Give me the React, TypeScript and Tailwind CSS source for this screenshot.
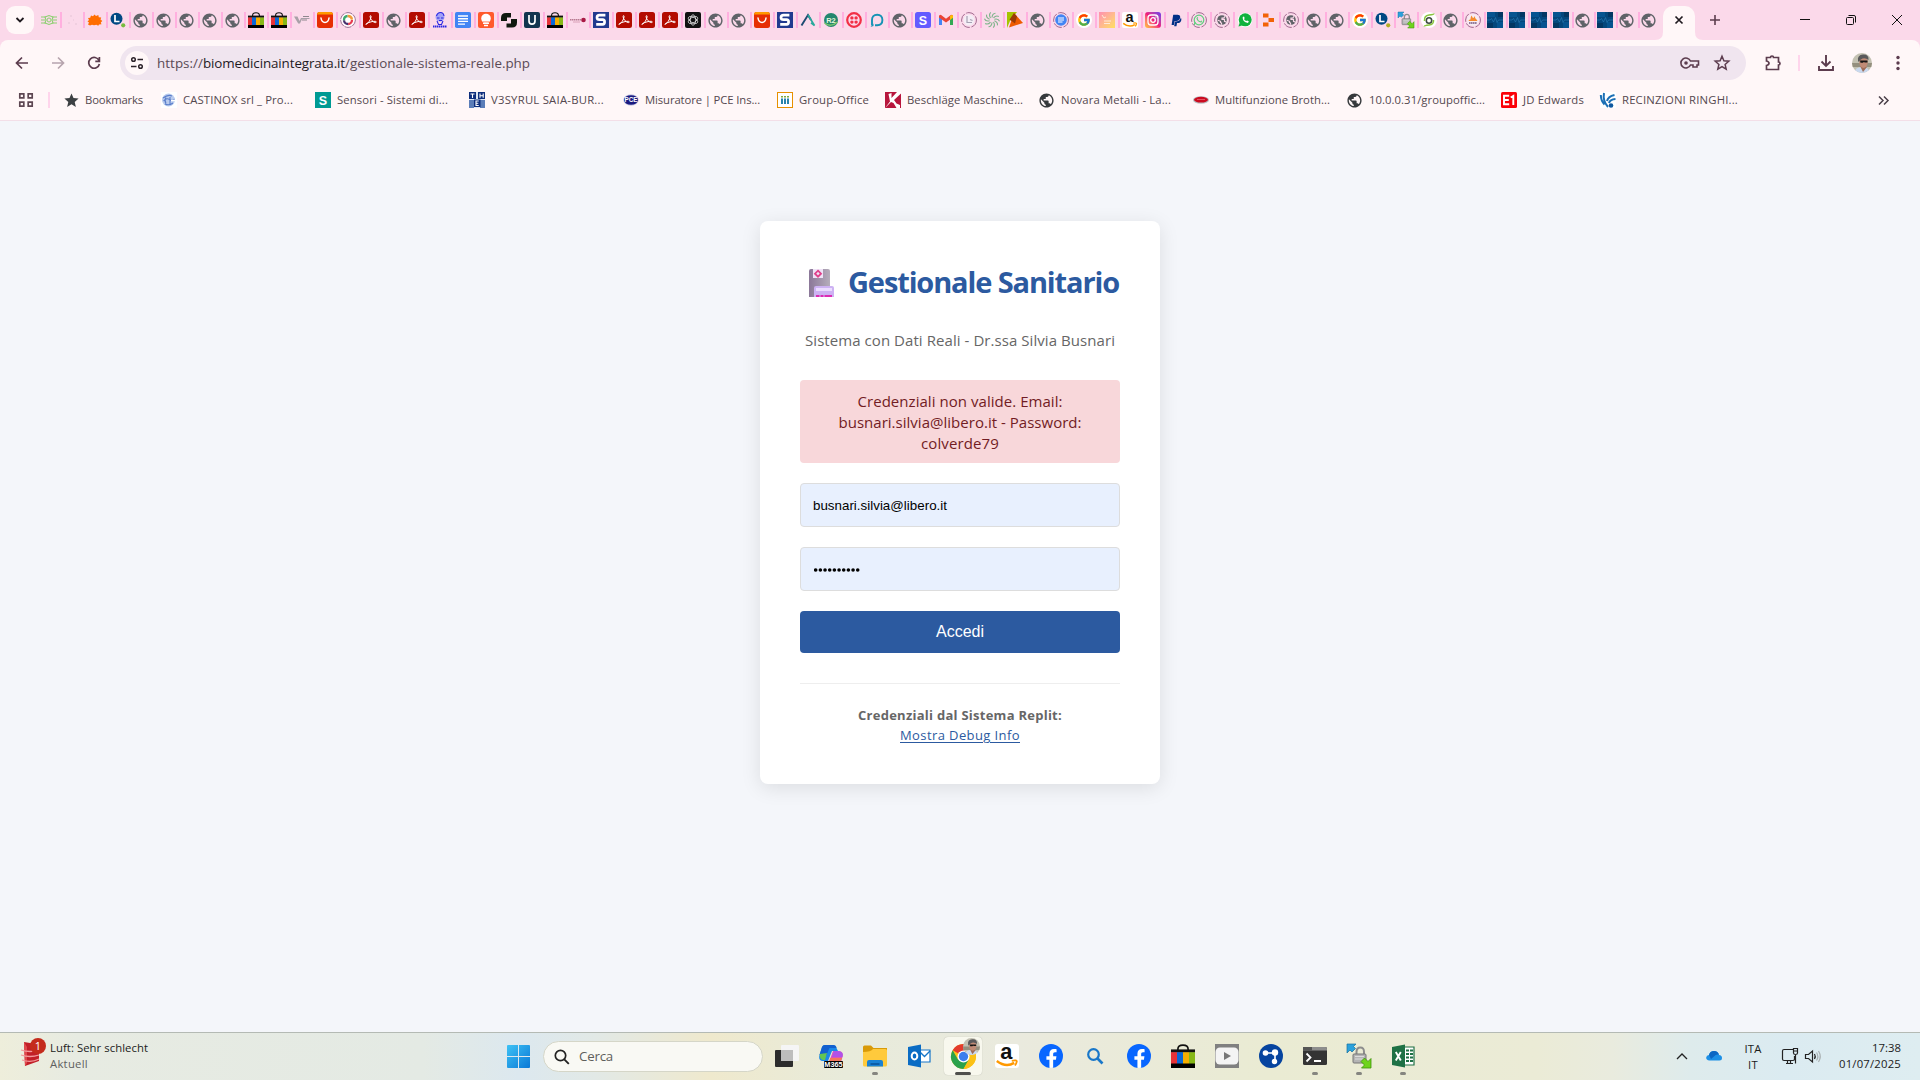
import { useLayoutEffect, useRef, useState } from 'react';
import type { ReactNode } from 'react';
import { MdPublic, MdStar } from 'react-icons/md';
import { FcGoogle } from 'react-icons/fc';
import { FaFacebookF, FaPaypal } from 'react-icons/fa';

const SANS = "font-['Open_Sans','Noto_Sans',sans-serif]";
const ARIAL = "font-['Liberation_Sans',Arial,sans-serif]";

/** One line of text whose letter spacing is adjusted so the line is `w` pixels wide. */
function Fit({ w, children, className = '' }: { w: number; children: string; className?: string }) {
  const ref = useRef<HTMLSpanElement>(null);
  const [ls, setLs] = useState(0);
  useLayoutEffect(() => {
    if (ref.current) setLs((w - ref.current.getBoundingClientRect().width) / children.length);
  }, [w, children]);
  return (
    <span ref={ref} className={`inline-block whitespace-pre ${className}`} style={{ letterSpacing: ls }}>
      {children}
    </span>
  );
}

function Svg({ s = 16, v = 16, children }: { s?: number; v?: number; children: ReactNode }) {
  return (
    <svg width={s} height={s} viewBox={`0 0 ${v} ${v}`} className="block shrink-0 overflow-visible" fill="none">
      {children}
    </svg>
  );
}

function T({ x = 8, y, size, fill, children, weight = 700 }: { x?: number; y: number; size: number; fill: string; children: string; weight?: number }) {
  return (
    <text x={x} y={y} fontSize={size} fill={fill} fontWeight={weight} textAnchor="middle" className={ARIAL}>
      {children}
    </text>
  );
}

const Globe = ({ color = '#5f6368' }: { color?: string }) => (
  <span className="flex size-4 items-center justify-center">
    <MdPublic size={17} color={color} className="-ml-px shrink-0" />
  </span>
);

const Bag = ({ s = 16 }: { s?: number }) => (
  <Svg s={s}>
    <path d="M4.6 5V3.4Q4.6.7 8 .7t3.4 2.7V5" stroke="#111" strokeWidth="1.1" />
    <path d="M0 3.6h16v2.2H0z" fill="#111" />
    <path d="M0 5.5h4v8H0z" fill="#e53238" />
    <path d="M4 5.5h4v8H4z" fill="#0968d8" />
    <path d="M8 5.5h4v8H8z" fill="#f5af02" />
    <path d="M12 5.5h4v8h-4z" fill="#86b817" />
    <path d="M0 13h16v3H0z" fill="#000" />
  </Svg>
);

const Ali = () => (
  <Svg>
    <rect width="16" height="16" rx="2.5" fill="#e62e04" />
    <path d="M0 2.5Q0 0 2.5 0h11Q16 0 16 2.5z" fill="#ff9900" />
    <path d="M4 6q.6 4.4 4 4.4T12 6" stroke="#fff" strokeWidth="1.5" strokeLinecap="round" />
  </Svg>
);

const Acrobat = () => (
  <Svg>
    <rect width="16" height="16" rx="2.5" fill="#b30b00" />
    <path
      d="M3.3 12.3c1.6-.6 4.7-4.800 4.800-7.600 0-1.500-1-1.500-1 0 0 2.600 3 5.600 5.200 5.900 1.500.1 1.400-1.200 0-1.300-2.200-.2-6.300.9-8.700 2.200-1.200.7-.8 1.200-.3.8z"
      stroke="#fff"
      strokeWidth="1"
    />
  </Svg>
);

const SBlue = () => (
  <Svg>
    <rect width="16" height="16" fill="#213a8f" />
    <path d="M12.400 3.200H6.600Q4 3.200 4 5.400T6.600 7.700h3q2 0 2 2.300t-2 2.400H3.200" stroke="#fff" strokeWidth="2.700" />
  </Svg>
);

const LDot = ({ dot }: { dot: string }) => (
  <Svg>
    <circle cx="6.500" cy="6.800" r="6" fill="#004883" />
    <path d="M5 3v6.500h4.500" stroke="#fff" strokeWidth="1.700" />
    <circle cx="13.200" cy="13.300" r="2.100" fill={dot} />
  </Svg>
);

const Ring = ({ children }: { children: ReactNode }) => (
  <Svg>
    <circle cx="8" cy="8" r="7.400" stroke="#a26a90" strokeWidth="1" strokeDasharray="9 1.600" />
    {children}
  </Svg>
);

const RingGlobe = () => (
  <Ring>
    <circle cx="8" cy="8" r="4.800" fill="#5f6368" />
    <path d="M3.800 8.300l2.700 1v1.200l1 .5v1.700M11 4.300L9.800 6H8v1.300h2.500v2l1.700.7" stroke="#fbd9ea" strokeWidth="1.200" />
  </Ring>
);

const Pulse = () => (
  <Svg>
    <rect width="16" height="16" fill="#04477c" />
    <path d="M0 0h8v5H0zM10 10h6v6h-6z" fill="#065490" />
    <path d="M11 0h5v5h-5zM0 11h6v5H0z" fill="#033763" />
    <path d="M0 8h3l1.500-1.500 2 3.500L8.500 5.500l1.500 5 1.500-2.500H16" stroke="#2b80b8" strokeWidth=".6" />
  </Svg>
);

const Lock = ({ s = 16 }: { s?: number }) => (
  <Svg s={s} v={24}>
    <path d="M9.500 11V8q0-4.500 3.800-4.500T17 8v3" stroke="#8d8d8d" strokeWidth="2" />
    <rect x="6" y="10" width="13" height="9" rx="1" fill="#b4b4b4" stroke="#777" />
    <path d="M8 12.500h9M8 15h9" stroke="#dcdcdc" />
    <path d="M0 0h9L6.500 2.500 8.500 4.500 5 8 3 6 0 9z" fill="#2aa1dc" stroke="#17719f" strokeWidth=".7" />
    <path d="M24 24h-9.500l3-3-3.500-3.500 3.500-3.500L21 17.500l3-3z" fill="#6fd41c" stroke="#3c8f0a" strokeWidth=".8" />
  </Svg>
);

const GoogleDot = () => (
  <span className="flex size-4 items-center justify-center rounded-full bg-white">
    <FcGoogle size={14} />
  </span>
);

const AmazonIcon = ({ s = 16 }: { s?: number }) => (
  <Svg s={s}>
    <rect width="16" height="16" rx="2" fill="#fff" />
    <text x="7.600" y="10" fontSize="14.500" fontWeight="700" fill="#111" textAnchor="middle" className={ARIAL}>
      a
    </text>
    <path d="M1.200 11.300q6 4.600 11.600 1.300" stroke="#ff9900" strokeWidth="1.600" />
    <path d="M11.200 11.200q3.500-.7 3.300.5t-1.200 2.600" stroke="#ff9900" strokeWidth="1.200" />
  </Svg>
);

const Green0 = () => (
  <Svg>
    <path d="M0 5h5M11 5h5M0 8h4M12 8h4M0 11h5M11 11h5" stroke="#8ed072" strokeWidth="1.200" />
    <path d="M4 5l4-1.500L12 5l-1 3 1 3-4 1.500L4 11l1-3z" stroke="#8ed072" strokeWidth="1.100" />
    <circle cx="8" cy="8" r="2" stroke="#8ed072" strokeWidth="1" />
  </Svg>
);

const globe = <Globe />;
const bag = <Bag />;
const ali = <Ali />;
const pdf = <Acrobat />;
const pulse = <Pulse />;

const tabs: ReactNode[] = [
  <Green0 />,
  <Svg><path d="M4 11h2M6 4h2M11 12h2M9 8h1" stroke="#f0cfe0" strokeWidth="2" /></Svg>,
  <Svg><path d="M1 12.500l1-2-1.500-1L2 8 1 6l2.200-.2L4 3.500l2 .8L7.500 2.500 9 4l2.300-1 .5 2.200 2.400.3-.7 2 1.800 1.500-1.500 1.500.7 1.700-2.500.3-.7 1.200-2-.9-2.300.5-2-.5-2 .7z" fill="#ff6d00" /></Svg>,
  <LDot dot="#77bc3f" />,
  globe, globe, globe, globe, globe, bag, bag,
  <Svg><path d="M0 4.500h3.500L5.500 9 7 6h8.500v1H8L6 11.500H4.200z" fill="#a9a0a8" /><path d="M9 4.500h6M8 8h5" stroke="#8f878e" /></Svg>,
  ali,
  <Svg><circle cx="8" cy="8" r="7.400" stroke="#9c7a98" strokeDasharray="7 1" /><circle cx="8" cy="8" r="6.500" fill="#fff" /><circle cx="8" cy="8" r="4" stroke="#e63c51" strokeWidth="2.300" strokeDasharray="6 19" /><circle cx="8" cy="8" r="4" stroke="#46306e" strokeWidth="2.300" strokeDasharray="6 19" strokeDashoffset="-6" /><circle cx="8" cy="8" r="4" stroke="#3eaa71" strokeWidth="2.300" strokeDasharray="6 19" strokeDashoffset="-12" /><circle cx="8" cy="8" r="4" stroke="#f29b38" strokeWidth="2.300" strokeDasharray="6 19" strokeDashoffset="-18" /></Svg>,
  pdf, globe, pdf,
  <Svg><circle cx="8" cy="5" r="4.500" fill="#a3a1f5" /><path d="M4.500 4q1-3.500 4-3.500T12 4M5 6h2.500M9 6h2.500M7 8.500h3M5 9l1.500 3.500h3L11 9" stroke="#2a27e2" strokeWidth="1.100" /><path d="M1 14.500h14" stroke="#2a27e2" strokeWidth="2" strokeDasharray="1.500 .5" /></Svg>,
  <Svg><rect width="16" height="16" rx="1.800" fill="#4285f4" /><path d="M3 4h10M3 6.700h10M3 9.400h10M3 12.100h7" stroke="#fff" strokeWidth="1.400" /></Svg>,
  <Svg><rect width="16" height="16" rx="2" fill="#ff5a2c" /><circle cx="8" cy="6.500" r="4.800" fill="#fff" /><path d="M4 9.300h8M5 11.300h6M6 13.500h4" stroke="#fff" strokeWidth="1.400" /><path d="M3 9.900h10" stroke="#ff5a2c" strokeWidth=".7" /></Svg>,
  <Svg><path d="M5 1h5v4.500H6V9H0V6Q0 1 5 1zM11 15.500H5.500V11.500H10V7h6v3.500q0 5-5 5z" fill="#10190f" /></Svg>,
  <Svg><rect width="16" height="16" rx="2" fill="#12344f" /><path d="M5 3v6q0 3.200 3 3.200T11 9V3" stroke="#fff" strokeWidth="1.700" /></Svg>,
  bag,
  <Svg><path d="M0 7.800h11" stroke="#b77991" strokeWidth="1.600" strokeDasharray="1.500 .5" /><path d="M3 10h7" stroke="#d9a0b7" /><circle cx="13.500" cy="8" r="2.300" fill="#a91944" /></Svg>,
  <SBlue />, pdf, pdf, pdf,
  <Svg><rect width="16" height="16" rx="2" fill="#111" /><ellipse cx="8" cy="8" rx="2.700" ry="5.200" stroke="#ddd" strokeWidth=".8" /><ellipse cx="8" cy="8" rx="2.700" ry="5.200" stroke="#ddd" strokeWidth=".8" transform="rotate(60 8 8)" /><ellipse cx="8" cy="8" rx="2.700" ry="5.200" stroke="#ddd" strokeWidth=".8" transform="rotate(120 8 8)" /></Svg>,
  globe, globe, ali, <SBlue />,
  <Svg><path d="M1.500 13.500L8 3l3 5" stroke="#1d4b72" strokeWidth="1.900" /><path d="M8 3l6.500 10.500L11 10.800" stroke="#28a99c" strokeWidth="1.600" /></Svg>,
  <Svg><circle cx="8" cy="8" r="7" fill="#24866e" /><path d="M1.500 11q6 5 13-1" stroke="#79c66c" strokeWidth="1.500" /><T y={10.500} size={7.500} fill="#e6f6d8">R2</T></Svg>,
  <Svg><circle cx="8" cy="8" r="6.800" stroke="#f22f46" strokeWidth="2.200" /><circle cx="5.900" cy="5.900" r="1.700" fill="#f22f46" /><circle cx="10.100" cy="5.900" r="1.700" fill="#f22f46" /><circle cx="5.900" cy="10.100" r="1.700" fill="#f22f46" /><circle cx="10.100" cy="10.100" r="1.700" fill="#f22f46" /></Svg>,
  <Svg><path d="M3 13.500V8q0-5.200 5.200-5.200T13.400 8t-5.200 5.200H6" stroke="#1593b5" strokeWidth="1.900" /><path d="M1.500 15l3-3.500v2.500z" fill="#1593b5" /></Svg>,
  globe,
  <Svg><rect width="16" height="16" rx="2.500" fill="#635bff" /><T y={12.500} size={12.500} fill="#fff">S</T></Svg>,
  <Svg><path d="M1 4.500V13h3V7z" fill="#4285f4" /><path d="M15 4.500V13h-3V7z" fill="#34a853" /><path d="M1 3.500L2.800 2.800 8 6.700l5.200-3.900 1.800.7v2L8 10.500 1 5.500z" fill="#ea4335" /><path d="M12 4l2-1.200 1 .9v2.100L12 8z" fill="#fbbc04" /></Svg>,
  <Ring><circle cx="8" cy="8" r="5.500" fill="#f4eef6" /><path d="M6 4v6.500h5M9 7.500l2.500 1" stroke="#a7a2b4" strokeWidth="1.200" /></Ring>,
  <Svg>{[0, 36, 72, 108, 144, 180, 216, 252, 288, 324].map((a) => (<path key={a} d="M8 5.500Q8.300 1.500 11.500 1.200" stroke="#7fb48b" strokeWidth="1.100" transform={`rotate(${a} 8 8)`} />))}</Svg>,
  <Svg><path d="M0 0h10L3 9l-3 7z" fill="#a5c400" /><path d="M7 1l9 10-14 4.500z" fill="#ee5a00" /><path d="M7 1L2.500 7.500 8 11.500l2-7z" fill="#9a3b05" /></Svg>,
  globe,
  <Ring><circle cx="8" cy="8" r="5.800" fill="#4285f4" /><path d="M5 6h6M5 8h6M5 10h4.500" stroke="#fff" strokeWidth="1.200" /></Ring>,
  <GoogleDot />,
  <span className="block size-4 bg-linear-to-br from-[#ff8fae] to-[#ffe05c]"><Svg><path d="M3 3l2 3 2-1M5 9h7M5 11.500h6" stroke="#ffe9d8" /></Svg></span>,
  <AmazonIcon />,
  <span className="block size-4 rounded-[3px] bg-linear-to-bl from-[#6a2cf0] via-[#f0147c] to-[#ffc41f]"><Svg><rect x="3" y="3" width="10" height="10" rx="3" stroke="#fff" strokeWidth="1.300" /><circle cx="8" cy="8" r="2.300" stroke="#fff" strokeWidth="1.300" /><circle cx="11" cy="5" r=".7" fill="#fff" /></Svg></span>,
  <span className="flex size-4 items-center justify-center"><FaPaypal size={13} color="#003087" /></span>,
  <Ring><circle cx="8" cy="8" r="4.800" stroke="#5fd07e" strokeWidth="1.200" /><path d="M3.200 13l1-3M6 6q.5 3.500 4 4l.7-1.300M6 6l1-.5" stroke="#5fd07e" strokeWidth="1.200" /></Ring>,
  <RingGlobe />,
  <Svg><circle cx="8" cy="8" r="7.300" fill="#fff" /><circle cx="8.200" cy="7.800" r="6.500" fill="#10b23d" /><path d="M1.500 14.500l1.200-4 3 2.800z" fill="#10b23d" /><path d="M5.700 5q-.5 5 5.300 6l.8-1.700-1.700-.9-.8.7Q7.500 8.500 7 6.900l.7-.7L7 4.500z" fill="#fff" /></Svg>,
  <Svg><path d="M3 1.500h5.500v4H3zM8.500 6H14v4H8.500zM3 10.500h5.500v4H3z" fill="#f26207" /></Svg>,
  <RingGlobe />,
  globe, globe, <GoogleDot />, <LDot dot="#b4ad22" />, <Lock />,
  <Svg><circle cx="8" cy="8" r="8" fill="#fff" /><circle cx="8" cy="8.500" r="2.700" stroke="#3d4a42" strokeWidth="1.600" /><path d="M3.500 9Q3 3.500 8 3t5-1.500M12.500 8q.5 4.500-4.500 5t-4.500 1.500" stroke="#8ac540" strokeWidth="1.500" /></Svg>,
  globe,
  <Ring><circle cx="8" cy="8" r="6" fill="#f7ebf2" /><path d="M3.500 9q.5-2 2-1.500Q5.500 4 7 3.500q-.3 2 1.500 2.500L10 4q-.5 2.500 1.500 3.500l1 1.500z" fill="#f58a2c" /><path d="M4 11h8" stroke="#73597f" strokeWidth="1.500" strokeDasharray="1.500 .4" /></Ring>,
  pulse, pulse, pulse, pulse, globe, pulse, globe, globe,
];

type Mark = { label: string; w: number; cell: string; icon: ReactNode };
const marks: Mark[] = [
  { label: 'Bookmarks', w: 58, cell: 'w-[97px]', icon: <span className="-ml-px -mr-px size-[17px]"><MdStar size={17} color="#3c4043" className="shrink-0" /></span> },
  { label: 'CASTINOX srl _ Pro...', w: 110, cell: 'w-[154px]', icon: <Svg><rect width="16" height="16" fill="#fff" /><circle cx="7.500" cy="8" r="6.500" fill="#b9cbee" /><path d="M2 6q5-4 9-2M2.500 9q3-3.500 6-1.500t5-.5M4 12q4 2 8-1M9 5v7M5 5.500q-2 3 0 6" stroke="#5b7fcb" strokeWidth="1.100" /><path d="M10 8.500h4" stroke="#fff" strokeWidth="1.500" /></Svg> },
  { label: 'Sensori - Sistemi di...', w: 111, cell: 'w-[154px]', icon: <Svg><rect width="16" height="16" fill="#009a93" /><T y={12.500} size={12.500} fill="#fff">S</T></Svg> },
  { label: 'V3SYRUL SAIA-BUR...', w: 113, cell: 'w-[154px]', icon: <Svg><rect width="16" height="16" fill="#dfe7f3" /><path d="M0 8h5v8H0zM11 8h5v8h-5z" fill="#5b7db8" /><path d="M0 0h7v7H0zM9 0h7v7H9zM5 7.500h6.500V15H5z" fill="#0e2e7d" /><path d="M1.500 2h4M3.500 2v4M11 1.500V5.700M14.200 1.500V5.700M11 3.700h3.200M9.700 9H7v4.500h2.700M7 11.200h2.300" stroke="#fff" strokeWidth="1.100" /></Svg> },
  { label: 'Misuratore | PCE Ins...', w: 115, cell: 'w-[154px]', icon: <Svg><ellipse cx="8" cy="8" rx="7.700" ry="5.800" fill="#c4c5e2" /><ellipse cx="8" cy="8" rx="7" ry="4.800" fill="#1a1a80" /><T y={10.300} size={6.300} fill="#fff">PCE</T></Svg> },
  { label: 'Group-Office', w: 70, cell: 'w-[108px]', icon: <Svg><rect x=".5" y=".5" width="15" height="15" fill="#fff" stroke="#e79000" /><path d="M5 6.500V12M8 6.500V12M11 6.500V12" stroke="#1f7ea8" strokeWidth="1.900" /><path d="M5 4v1.500M8 4v1.500M11 4v1.500" stroke="#7ba535" strokeWidth="1.900" /></Svg> },
  { label: 'Beschläge Maschine...', w: 116, cell: 'w-[154px]', icon: <Svg><rect width="16" height="16" fill="#b8163d" /><path d="M0 16L5 9.500 3.500 2 6.500 1v5L12 0h4v1.500L9 8l2.500 3.500L15 13v3h-3.500L8.500 11 6 10z" fill="#fff" /></Svg> },
  { label: 'Novara Metalli - La...', w: 110, cell: 'w-[154px]', icon: <Globe color="#36393c" /> },
  { label: 'Multifunzione Broth...', w: 115, cell: 'w-[154px]', icon: <Svg><ellipse cx="8" cy="8" rx="8" ry="3.800" fill="#b8bfc3" /><ellipse cx="8" cy="7.700" rx="7" ry="2.900" fill="#cc0b20" /><path d="M4 7.500h8" stroke="#f0707c" strokeWidth=".7" /></Svg> },
  { label: '10.0.0.31/groupoffic...', w: 116, cell: 'w-[154px]', icon: <Globe color="#36393c" /> },
  { label: 'JD Edwards', w: 61, cell: 'w-[99px]', icon: <Svg><rect width="16" height="16" rx="1.500" fill="#fb0007" /><path d="M8.200 3.700H3v8.600h5.200M3 8h4.800M9.700 5.500l2.600-1.600v9" stroke="#fff" strokeWidth="1.900" /></Svg> },
  { label: 'RECINZIONI RINGHI...', w: 116, cell: 'w-[154px]', icon: <Svg><rect width="16" height="16" fill="#fff" /><path d="M4 1Q2.500 9 8 15M.8 3Q1 9 4.500 12.500M14.500 3Q8 4.500 7 9M15.500 7Q10 7.500 9 11" stroke="#1b6fb5" strokeWidth="2" /><circle cx="11" cy="13.500" r="2.300" fill="#0f58a0" /></Svg> },
];

const Avatar = ({ s }: { s: number }) => (
  <Svg s={s} v={20}>
    <clipPath id={`face${s}`}><circle cx="10" cy="10" r="10" /></clipPath>
    <g clipPath={`url(#face${s})`}>
      <path d="M0 0h20v20H0z" fill="#c3c1b2" />
      <path d="M0 10h20v4H0z" fill="#948f7e" />
      <path d="M2 20q1-6 8-6t8 6z" fill="#c9d8ee" />
      <path d="M8 13l3 6 4-5z" fill="#9d6c57" />
      <ellipse cx="11.500" cy="9" rx="4.300" ry="6" fill="#c08b76" />
      <path d="M6 8Q5 2 11 1.500T16.500 7q-3-2.500-6-1.500T7 9z" fill="#5a595b" />
      <path d="M8 7.500h7.500V9.500h-3L12 8.800l-1 .9H8.500z" fill="#151515" />
    </g>
  </Svg>
);

function TabStrip() {
  return (
    <div className="flex h-10 items-end bg-[#fbd9ea]">
      <div className="mb-1.5 ml-1.5 flex size-7 items-center justify-center rounded-[9px] bg-[#fff7f8]">
        <Svg s={10} v={10}><path d="M1.500 3L5 6.500 8.500 3" stroke="#1f1a1f" strokeWidth="1.800" /></Svg>
      </div>
      <div className="mb-3 ml-[7px] flex h-4">
        {tabs.map((icon, i) => (
          <div key={i} className={i < 60 ? 'flex w-[23px] shrink-0' : 'flex w-[22px] shrink-0'}>
            {icon}
            {i < 70 && <i className="ml-[3px] h-4 w-0.5 shrink-0 bg-[#ffb0df]" />}
          </div>
        ))}
      </div>
      <div className="-ml-2 flex items-end">
        <Svg s={8} v={8}><path d="M8 0v8H0q8 0 8-8z" fill="#fff7f8" /></Svg>
        <div className="flex h-[34px] w-8 items-center justify-center rounded-t-[10px] bg-[#fff7f8] pb-1.5">
          <Svg s={10} v={10}><path d="M1.500 1.500l7 7M8.500 1.500l-7 7" stroke="#1f1a1f" strokeWidth="1.700" /></Svg>
        </div>
        <Svg s={8} v={8}><path d="M0 0v8h8Q0 8 0 0z" fill="#fff7f8" /></Svg>
      </div>
      <div className="mb-[15px] ml-[7px]">
        <Svg s={10} v={10}><path d="M5 0v10M0 5h10" stroke="#5c3c4e" strokeWidth="1.600" /></Svg>
      </div>
      <div className="mb-[15px] ml-20 flex items-center gap-9">
        <Svg s={10} v={10}><path d="M0 4.500h10" stroke="#111" /></Svg>
        <Svg s={10} v={10}><rect x=".5" y="2.500" width="7" height="7" rx="1" stroke="#111" /><path d="M2.500.5H8Q9.500.5 9.500 2v5.500" stroke="#111" /></Svg>
        <Svg s={10} v={10}><path d="M0 0l10 10M10 0L0 10" stroke="#111" /></Svg>
      </div>
    </div>
  );
}

function Toolbar() {
  return (
    <div className="bg-[#fbd9ea]">
      <div className="flex h-[46px] items-center rounded-t-lg bg-[#fff7f8] pl-[14px]">
        <Svg s={16}><path d="M14 8H3M8 2.500L2.500 8 8 13.500" stroke="#5c3c4e" strokeWidth="1.700" /></Svg>
        <span className="ml-5"><Svg s={16}><path d="M2 8h11M8 2.500L13.500 8 8 13.500" stroke="#b7a4ae" strokeWidth="1.700" /></Svg></span>
        <span className="ml-5"><Svg s={16}><path d="M13 5.500A5.400 5.400 0 1 0 13.400 9M13.400 2v4.300H9.300" stroke="#5c3c4e" strokeWidth="1.700" /></Svg></span>
        <div className="ml-[18px] flex h-[34px] w-[1626px] shrink-0 items-center rounded-full bg-[#f0e5ef] pl-[5px] text-[13.400px] text-[#5a4a55]">
          <div className="flex size-6 items-center justify-center rounded-full bg-[#fff7f8]">
            <Svg s={14} v={14}><circle cx="3.500" cy="3.500" r="1.800" stroke="#2b2229" strokeWidth="1.500" /><path d="M7.500 3.500H13M1 10.500h5.500" stroke="#2b2229" strokeWidth="1.600" /><circle cx="10.500" cy="10.500" r="1.800" stroke="#2b2229" strokeWidth="1.500" /></Svg>
          </div>
          <div className="ml-2 flex w-[1523px] whitespace-pre">
            <Fit w={46}>https://</Fit>
            <Fit w={142} className="text-[#1f1a1f]">biomedicinaintegrata.it</Fit>
            <Fit w={185}>/gestionale-sistema-reale.php</Fit>
          </div>
          <Svg s={20} v={20}><path d="M10.500 8A5 5 0 1 0 10.500 12H13v2h4v-2h1.500V8z" stroke="#5c3c4e" strokeWidth="1.600" /><circle cx="6" cy="10" r="1.800" fill="#5c3c4e" /></Svg>
          <span className="ml-[13px]"><Svg s={18} v={18}><path d="M9 2.300l1.900 4.500 4.900.4-3.700 3.200 1.100 4.800L9 12.700l-4.200 2.500 1.100-4.800-3.700-3.200 4.900-.4z" stroke="#5c3c4e" strokeWidth="1.500" /></Svg></span>
        </div>
        <span className="ml-[18px]"><Svg s={18} v={18}><path d="M2.500 3.500h4a1.500 1.500 0 0 1 3 0h5v4.500a1.500 1.500 0 0 1 0 3v4.500h-12v-4q2.500-.5 2.500-2.200T2.500 7z" stroke="#5c3c4e" strokeWidth="1.700" /></Svg></span>
        <i className="ml-4 h-4 w-0.5 bg-[#ffd5ec]" />
        <span className="ml-[17px]"><Svg s={18} v={18}><path d="M9 1v10.500M4.500 7.500L9 12l4.500-4.500M2 12v4h14v-4" stroke="#5c3c4e" strokeWidth="1.900" /></Svg></span>
        <span className="ml-[17px]"><Avatar s={20} /></span>
        <span className="ml-[18px]"><Svg s={16}><circle cx="8" cy="2.500" r="1.700" fill="#5c3c4e" /><circle cx="8" cy="8" r="1.700" fill="#5c3c4e" /><circle cx="8" cy="13.500" r="1.700" fill="#5c3c4e" /></Svg></span>
      </div>
      <div className="flex h-[35px] items-start border-b border-[#f3dfe8] bg-[#fff7f8] pl-[18px] pt-[6px] text-[11.300px] text-[#54484f]">
        <Svg><path d="M1.800 1.800h4v4h-4zM10.200 1.800h4v4h-4zM1.800 10.200h4v4h-4zM10.200 10.200h4v4h-4z" stroke="#5c4652" strokeWidth="1.700" /></Svg>
        <i className="ml-[14px] mr-[14px] h-4 w-0.5 shrink-0 bg-[#ffd5ec]" />
        {marks.map((m) => (
          <div key={m.label} className={`flex h-4 shrink-0 items-center ${m.cell}`}>
            {m.icon}
            <Fit w={m.w} className="ml-1.5">{m.label}</Fit>
          </div>
        ))}
        <span className="ml-[124px] mt-[3px]"><Svg s={11} v={11}><path d="M1 1.500l4 4-4 4M6 1.500l4 4-4 4" stroke="#4a3f48" strokeWidth="1.500" /></Svg></span>
      </div>
    </div>
  );
}

function LoginCard() {
  return (
    <div className="flex h-[563px] w-[400px] flex-col items-center rounded-lg bg-white px-10 pt-[39px] shadow-[0_4px_20px_rgba(0,0,0,0.1)]">
      <h1 className="flex h-[43px] w-full items-center pl-2 text-[29px] font-bold text-[#2c5aa0]">
        <span className="pt-0.5">
          <Svg s={28} v={28}>
            <defs>
              <linearGradient id="hosp" x1="0" x2="1"><stop stopColor="#8b7798" /><stop offset="1" stopColor="#b5adbb" /></linearGradient>
            </defs>
            <path d="M1 2q0-2 2-2h17q2 0 2 2v26H1z" fill="url(#hosp)" />
            <path d="M5 0h10v9H5z" fill="#efe3f7" />
            <path d="M10 1.700L13 4.700 10 7.700 7 4.700z" stroke="#e0408a" strokeWidth="1.800" />
            <path d="M6 19q0-2 2-2h16q2 0 2 2v9H6z" fill="#cdb2f3" />
            <path d="M8 20.500h16" stroke="#ebdcff" strokeWidth="3" />
            <path d="M8 27h16" stroke="#dc2cb4" strokeWidth="2.200" strokeDasharray="3.500 1 3 1 8 0" />
          </Svg>
        </span>
        <Fit w={271} className="ml-3">Gestionale Sanitario</Fit>
      </h1>
      <p className="mt-[27px] h-[21px] text-[15px] leading-[21px] text-[#666]">
        <Fit w={310}>Sistema con Dati Reali - Dr.ssa Silvia Busnari</Fit>
      </p>
      <div className="mt-[29px] flex h-[83px] w-80 flex-col items-center rounded bg-[#f8d7da] pt-[11px] text-[15px] leading-[21px] text-[#721c24]">
        <Fit w={205}>Credenziali non valide. Email:</Fit>
        <Fit w={243}>busnari.silvia@libero.it - Password:</Fit>
        <Fit w={78}>colverde79</Fit>
      </div>
      <div className={`mt-5 flex h-11 w-80 items-center rounded border border-[#ddd] bg-[#e8f0fe] px-3 pt-px text-[13.333px] text-black ${ARIAL}`}>
        <Fit w={134}>busnari.silvia@libero.it</Fit>
      </div>
      <div className="mt-5 flex h-11 w-80 items-center rounded border border-[#ddd] bg-[#e8f0fe] px-3">
        <svg width="47" height="4" viewBox="0 0 47 4" className="ml-px mt-px">
          {Array.from({ length: 10 }, (_, i) => (
            <circle key={i} cx={1.700 + i * 4.670} cy="2" r="1.800" fill="#000" />
          ))}
        </svg>
      </div>
      <button className={`mt-5 h-[42px] w-80 rounded bg-[#2c5aa0] text-base text-white ${ARIAL}`}>Accedi</button>
      <div className="mt-[30px] flex w-80 flex-col items-center border-t border-[#eee] pt-[21px] text-[13px] leading-5">
        <strong className="h-5 text-[#666]"><Fit w={204}>Credenziali dal Sistema Replit:</Fit></strong>
        <a className="h-5 text-[#2c5aa0]"><Fit w={120} className="underline underline-offset-2">Mostra Debug Info</Fit></a>
      </div>
    </div>
  );
}

const Facebook = () => (
  <span className="flex size-6 items-end justify-center overflow-hidden rounded-full bg-[#0866ff]">
    <FaFacebookF size={19} color="#fff" />
  </span>
);

type TaskApp = { icon: ReactNode; open?: boolean; active?: boolean };
const apps: TaskApp[] = [
  { icon: <Svg s={24} v={24}><rect y="6" width="18" height="17" rx="1" fill="#2c2c2c" /><rect x="6" y="1" width="18" height="16" rx="1" fill="#f5f5f5" /><path d="M6 6h12v11H6z" fill="#bdbdbd" /></Svg> },
  { icon: (
    <Svg s={24} v={24}>
      <path d="M6 1h8q3 0 3.500 3L19 7h-6L9 17H3q-4-1-2.500-6L3 3q.7-2 3-2z" fill="#1988e8" />
      <path d="M6 1h8q3 0 3.500 3h-7L7 12l-6.500-1L3 3q.7-2 3-2z" fill="#1260cf" />
      <path d="M1 10l7-1-2 7H4Q0 15 1 10z" fill="#62c552" />
      <path d="M14 7h6q5 1 3.500 6L22 18H10z" fill="#dc54b8" />
      <path d="M15 7h5q5 1 3.500 6H13z" fill="#b052e8" />
      <path d="M11 14h12l-1.500 4H10z" fill="#f4775c" />
      <rect x="5" y="17" width="19" height="7" rx="1" fill="#000" />
      <T x={14.500} y={23.200} size={7.300} fill="#fff">M365</T>
    </Svg>
  ) },
  { open: true, icon: <Svg s={24} v={24}><path d="M0 3q0-1.500 1.500-1.500H8L10.500 4H24v4H0z" fill="#d99a08" /><path d="M0 8q8 0 10-3h12.500Q24 5 24 6.500V21q0 1.500-1.500 1.500h-21Q0 22.500 0 21z" fill="#ffca3c" /><path d="M4 22.500V18q0-2 2-2h12q2 0 2 2v4.500z" fill="#1a82d4" /><path d="M7.500 19h9v2h-9z" fill="#0c5ea8" /></Svg> },
  { icon: <Svg s={24} v={24}><path d="M12 6h11v12H12z" fill="#fff" stroke="#1676c9" strokeWidth="1.200" /><path d="M13 8l4.500 4.500L23 7" stroke="#1676c9" strokeWidth="1.400" /><path d="M1 3l13-2.500v23L1 21z" fill="#0a6cc4" /><ellipse cx="7.500" cy="12" rx="2.800" ry="3.500" stroke="#fff" strokeWidth="2" /></Svg> },
  { active: true, open: true, icon: (
    <div className="relative">
      <Svg s={25} v={24}>
        <circle cx="12" cy="12" r="12" fill="#fbc116" />
        <path d="M12 12L1.600 6A12 12 0 0 1 22.400 6z" fill="#e33b2e" />
        <path d="M1.600 6A12 12 0 0 0 12 24l5.200-9L12 12l-5.200 3z" fill="#2ba24c" />
        <path d="M12 6.500h10.600A12 12 0 0 1 12 24l5-9z" fill="#fbc116" />
        <circle cx="12" cy="12" r="5.800" fill="#fff" /><circle cx="12" cy="12" r="4.500" fill="#3b7ded" />
      </Svg>
      <div className="absolute -top-1.5 left-3"><Avatar s={17} /></div>
    </div>
  ) },
  { icon: <AmazonIcon s={24} /> },
  { icon: <Facebook /> },
  { icon: <Svg s={24} v={24}><circle cx="10.500" cy="10.500" r="5.300" stroke="#1977c9" strokeWidth="2.200" /><path d="M14.500 14.500l5 5" stroke="#1977c9" strokeWidth="2.600" /></Svg> },
  { icon: <Facebook /> },
  { icon: <Bag s={24} /> },
  { icon: <Svg s={24} v={24}><path d="M0 0h24v24H0z" fill="#808080" /><rect x=".5" y="3.500" width="23" height="17" rx="4.500" fill="#f4f4f4" /><path d="M9 8l7 4-7 4z" fill="#777" /></Svg> },
  { icon: <Svg s={24} v={24}><circle cx="12" cy="12" r="12" fill="#06449f" /><path d="M7 9h9v9M16 9" stroke="#fff" strokeWidth="1.600" /><circle cx="6.500" cy="9" r="2.800" fill="#fff" /><circle cx="16" cy="8.500" r="3.200" fill="#fff" /><circle cx="15.500" cy="17.500" r="2.700" fill="#fff" /></Svg> },
  { open: true, icon: <Svg s={24} v={24}><rect y="3" width="24" height="18" rx="1.500" fill="#343434" /><path d="M0 6.500V4.500Q0 3 1.500 3h21Q24 3 24 4.500v2z" fill="#8d8d8d" /><path d="M0 3h9v3.500H0z" fill="#555" /><path d="M3.500 9.500l4 4-4 4M11 17h7" stroke="#fff" strokeWidth="1.800" /></Svg> },
  { open: true, icon: <Lock s={24} /> },
  { open: true, icon: <Svg s={24} v={24}><path d="M13 3h10v18H13z" fill="#fff" stroke="#1e7145" strokeWidth="1.200" /><path d="M15 6.500h3M19 6.500h3M15 10h3M19 10h3M15 13.500h3M19 13.500h3M15 17h3M19 17h3" stroke="#1e7145" strokeWidth="1.800" /><path d="M1 3l13-2.500v23L1 21z" fill="#1e7145" /><path d="M4.800 8l5 8.500M9.800 8l-5 8.500" stroke="#fff" strokeWidth="1.900" /></Svg> },
];

function Taskbar() {
  return (
    <div className="flex h-12 items-start border-t border-[#b4bab4] bg-[linear-gradient(90deg,#eeeedb_0%,#e7ebe2_4%,#e4eae4_22%,#dce8ef_27%,#e2e9e6_31%,#efe9cd_37%,#e8ebdb_44%,#eaeade_53%,#eaebd3_66%,#ebebd6_80%,#e9ebde_84%,#deebec_88%,#dbebf1_93%,#deedf1_100%)] text-[#1b1b1b]">
      <div className="flex w-[507px] items-start pl-5 pt-1">
        <div className="relative mt-[5px] h-6 w-[30px]">
          <Svg s={24} v={24}><path d="M4 0l12 2 3 4v13L5 24z" fill="#c21f28" /><path d="M4 0l3 5v16l-2 3z" fill="#e0484d" /><path d="M1 8q9 3 18 0M1 13q9 3 18 0M2 18q9 3 17-1" stroke="#f29a9c" strokeWidth="1.300" /></Svg>
          <div className="absolute -top-1 left-2.5 flex size-4 items-center justify-center rounded-full bg-[#c42b1c] text-[11px] text-white">1</div>
        </div>
        <div className="flex flex-col items-start pt-[3px] text-[11.300px] leading-4">
          <Fit w={98}>Luft: Sehr schlecht</Fit>
          <Fit w={38} className="text-[#5e605e]">Aktuell</Fit>
        </div>
      </div>
      <div className="mt-3 shrink-0">
        <Svg s={23} v={23}>
          <defs><linearGradient id="win" x1="0" y1="0" x2="1" y2="1" gradientUnits="objectBoundingBox"><stop stopColor="#3ec2f5" /><stop offset="1" stopColor="#0a78d6" /></linearGradient></defs>
          <path d="M0 1q0-1 1-1h10v11H0zM12 0h10q1 0 1 1v10H12zM0 12h11v11H1q-1 0-1-1zM12 12h11v10q0 1-1 1H12z" fill="url(#win)" />
        </Svg>
      </div>
      <div className="ml-[13px] mt-2 flex h-[31px] w-[220px] shrink-0 items-center rounded-full border border-[#d5d6c8] bg-[#f9f9f4] pl-2.5 text-[13.300px] text-[#5f5f5c]">
        <Svg s={16}><circle cx="6.500" cy="6.500" r="5.200" stroke="#222" strokeWidth="1.700" /><path d="M10.300 10.300l4.500 4.500" stroke="#222" strokeWidth="1.900" /></Svg>
        <Fit w={34} className="ml-[9px]">Cerca</Fit>
      </div>
      <div className="ml-0.5 flex shrink-0">
        {apps.map((a, i) => (
          <div key={i} className="flex h-[46px] w-11 flex-col items-center pt-1">
            <div className={a.active ? 'flex h-[38px] w-[38px] items-center justify-center rounded bg-[#f8f8ee] shadow-[0_0_1px_rgba(0,0,0,0.25)]' : 'flex h-[38px] w-[38px] items-center justify-center'}>{a.icon}</div>
            {a.open && <i className={a.active ? '-mt-[3px] h-[3px] w-4 rounded-full bg-[#4f4f4c]' : '-mt-[3px] h-[3px] w-1.5 rounded-full bg-[#858580]'} />}
          </div>
        ))}
      </div>
      <div className="ml-[252px] mt-[19px]"><Svg s={10} v={10}><path d="M0 7l5-5 5 5" stroke="#222" strokeWidth="1.300" /></Svg></div>
      <div className="ml-[19px] mt-[15px]"><Svg s={16}><path d="M3.500 12.500Q0 12 .2 9.500T3 7q1-4 5-4t5 4q3 .3 3 3t-3 2.500z" fill="#1b8fe6" /><path d="M3 7q1-4 5-4t5 3.800Q10 6 8 8.500L5 11Z" fill="#0b66c3" /></Svg></div>
      <div className="ml-[22px] mt-2 flex w-[18px] flex-col items-center text-[11.300px] leading-4"><Fit w={17}>ITA</Fit><Fit w={10}>IT</Fit></div>
      <div className="ml-[19px] mt-[14px]"><Svg s={18} v={18}><path d="M12 2.500H3Q1.500 2.500 1.500 4v8q0 1.500 1.500 1.500h9Q13.500 13.500 13.500 12V9M5 16.500h7M6.500 13.500v3M9.500 13.500v3M12.500 1.500h4V6q0 1.500-2 1.500t-2-1.500zM14.500 7.500v9M12.500 4h4" stroke="#222" strokeWidth="1.200" /></Svg></div>
      <div className="ml-[5px] mt-[15px]"><Svg s={18} v={18}><path d="M1.500 6.500v4h3L8.500 14V3L4.500 6.500z" stroke="#222" strokeWidth="1.200" /><path d="M10.500 6q1.500 2.500 0 5" stroke="#222" strokeWidth="1.200" /><path d="M12.500 4.500q2.700 4 0 8M14.500 3q3.500 5.500 0 11" stroke="#a9b0b2" strokeWidth="1.200" /></Svg></div>
      <div className="ml-[17px] mt-[7px] flex w-[62px] flex-col items-end text-[11.300px] leading-4"><Fit w={29}>17:38</Fit><Fit w={62}>01/07/2025</Fit></div>
    </div>
  );
}

export default function App() {
  return (
    <div className={`flex h-[1080px] w-[1920px] flex-col overflow-hidden bg-[#f4f6fa] ${SANS}`}>
      <TabStrip />
      <Toolbar />
      <main className="flex flex-1 justify-center pt-[100px]">
        <LoginCard />
      </main>
      <Taskbar />
    </div>
  );
}
